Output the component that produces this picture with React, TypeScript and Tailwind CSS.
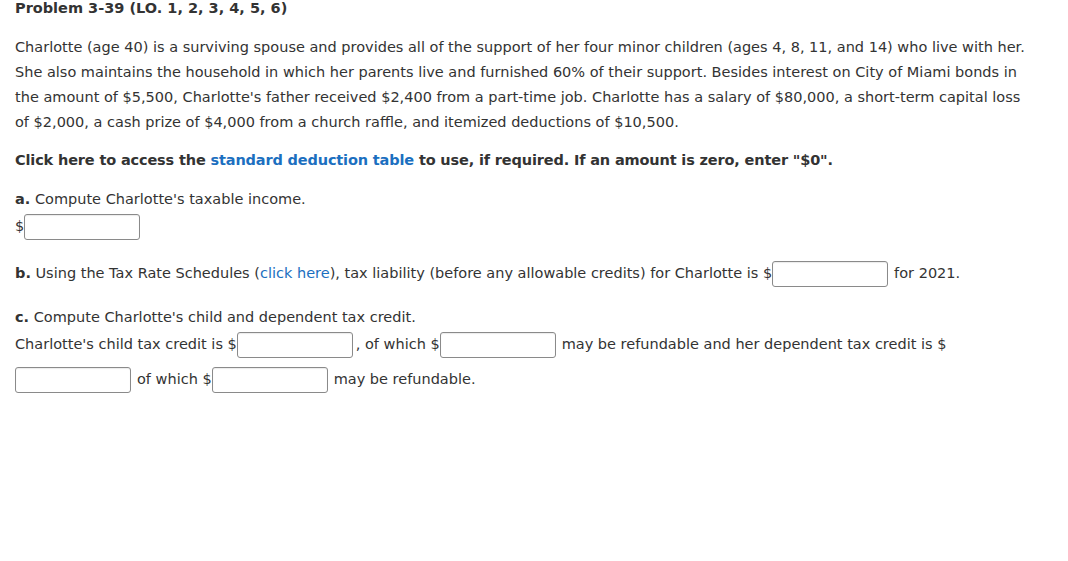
import React from "react";

const Box = () => (
  <input
    type="text"
    className="w-[116px] h-[26px] border border-[#8a8a8a] rounded-[3px] bg-white align-middle shadow-[inset_0_1px_1px_rgba(0,0,0,0.08)]"
  />
);

const App = () => {
  return (
    <div className="w-full min-h-screen bg-white text-[#333] font-['DejaVu_Sans','Verdana',sans-serif] text-[14.5px] px-[15px]">
      {/* title */}
      <h1 className="text-[14.5px] font-bold leading-[16px] pt-0">
        Problem 3-39 (LO. 1, 2, 3, 4, 5, 6)
      </h1>

      {/* problem text */}
      <p className="mt-[19px] leading-[25px] whitespace-nowrap">
        Charlotte (age 40) is a surviving spouse and provides all of the support of her four minor children (ages 4, 8, 11, and 14) who live with her.
        <br />
        She also maintains the household in which her parents live and furnished 60% of their support. Besides interest on City of Miami bonds in
        <br />
        the amount of $5,500, Charlotte's father received $2,400 from a part-time job. Charlotte has a salary of $80,000, a short-term capital loss
        <br />
        of $2,000, a cash prize of $4,000 from a church raffle, and itemized deductions of $10,500.
      </p>

      <p className="mt-[13px] leading-[25px] font-bold tracking-[-0.15px]">
        Click here to access the{" "}
        <span className="text-[#1b6fc0]">standard deduction table</span> to use, if required. If an amount is zero, enter "$0".
      </p>

      {/* a */}
      <p className="mt-[14px] leading-[25px]">
        <span className="font-bold">a.</span> Compute Charlotte's taxable income.
      </p>
      <div className="mt-[2px] flex items-center h-[26px]">
        <span>$</span>
        <Box />
      </div>

      {/* b */}
      <div className="mt-[21px] flex items-center h-[26px] whitespace-nowrap">
        <span>
          <span className="font-bold">b.</span> Using the Tax Rate Schedules (
          <span className="text-[#1b6fc0]">click here</span>), tax liability (before any allowable credits) for Charlotte is $
        </span>
        <Box />
        <span className="ml-[6px]">for 2021.</span>
      </div>

      {/* c */}
      <p className="mt-[18px] leading-[25px]">
        <span className="font-bold">c.</span> Compute Charlotte's child and dependent tax credit.
      </p>
      <div className="mt-[2px] flex items-center h-[26px] whitespace-nowrap">
        <span>Charlotte's child tax credit is $</span>
        <Box />
        <span className="ml-[3px]">, of which $</span>
        <Box />
        <span className="ml-[6px]">may be refundable and her dependent tax credit is $</span>
      </div>
      <div className="mt-[9px] flex items-center h-[26px] whitespace-nowrap">
        <Box />
        <span className="ml-[6px]">of which $</span>
        <Box />
        <span className="ml-[6px]">may be refundable.</span>
      </div>
    </div>
  );
};

export default App;
